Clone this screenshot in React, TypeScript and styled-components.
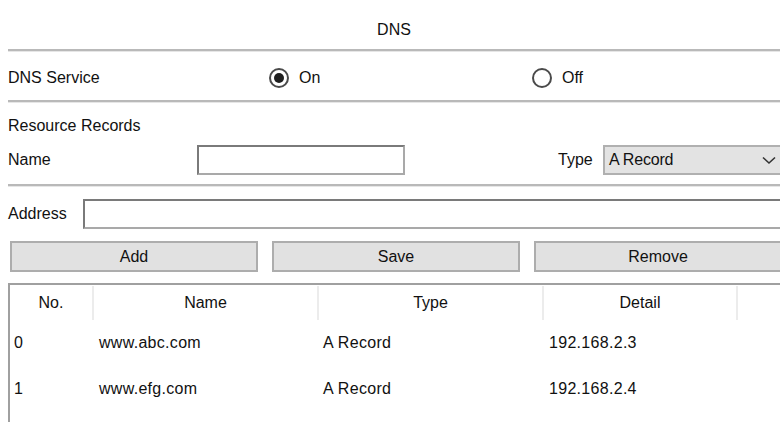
import React from "react";
import styled, { createGlobalStyle } from "styled-components";

const Global = createGlobalStyle`
  html, body { margin: 0; padding: 0; background: #fff; overflow: hidden; }
  body { font-family: "Liberation Sans", Arial, sans-serif; color: #111; }
  * { box-sizing: border-box; }
`;

const Page = styled.div`
  width: 780px;
  height: 422px;
  overflow: hidden;
  padding-left: 8px;
`;

const Panel = styled.div`
  width: 772px;
  display: flex;
  flex-direction: column;
  font-size: 16px;
  line-height: 18px;
`;

const Title = styled.div`
  height: 49px;
  display: flex;
  align-items: center;
  justify-content: center;
  padding-top: 10px;
`;

const Rule = styled.div`
  height: 3px;
  border-top: 2px solid #b9b9b9;
  border-bottom: 1px solid #e6e6e6;
`;

const ServiceRow = styled.div`
  display: grid;
  grid-template-columns: 261px 263px 1fr;
  align-items: center;
  height: 48px;
  padding-top: 3px;
`;

const RadioLabel = styled.label`
  display: flex;
  align-items: center;
  gap: 10px;
`;

const RadioCircle = styled.span<{ $checked?: boolean }>`
  width: 20px;
  height: 20px;
  border-radius: 50%;
  border: 2px solid #4a4a4a;
  display: flex;
  align-items: center;
  justify-content: center;
  &::after {
    content: "";
    width: 10px;
    height: 10px;
    border-radius: 50%;
    background: #1e1e1e;
    display: ${(p) => (p.$checked ? "block" : "none")};
  }
`;

const SectionLabel = styled.div`
  padding-top: 14px;
  height: 31px;
`;

const NameRow = styled.div`
  display: flex;
  align-items: center;
  height: 50px;
  padding: 11px 0 9px;
`;

const FieldLabel = styled.span<{ $w?: number }>`
  width: ${(p) => (p.$w ? `${p.$w}px` : "auto")};
  flex-shrink: 0;
`;

const TextBox = styled.div<{ $w?: string }>`
  width: ${(p) => p.$w || "auto"};
  height: 30px;
  border: 2px solid #7a7a7a;
  border-color: #7a7a7a #a9a9a9 #a9a9a9 #7a7a7a;
  background: #fff;
  flex-shrink: 0;
`;

const Select = styled.div`
  width: 180px;
  height: 30px;
  flex-shrink: 0;
  background: #e3e3e3;
  border: 2px solid #b0b0b0;
  display: flex;
  align-items: center;
  justify-content: space-between;
  padding: 0 5px 0 4px;
  letter-spacing: -0.2px;
`;

const AddressRow = styled.div`
  display: flex;
  align-items: center;
  padding-top: 12px;
`;

const ButtonRow = styled.div`
  display: grid;
  grid-template-columns: repeat(3, 248px);
  gap: 14px;
  margin-left: 2px;
  margin-top: 12px;
`;

const Button = styled.button`
  height: 31px;
  background: #e1e1e1;
  border: 2px solid #adadad;
  font-family: inherit;
  font-size: 16px;
  color: #111;
  padding: 0;
`;

const Table = styled.div`
  margin-top: 11px;
  width: 790px;
  height: 140px;
  border-top: 2px solid #a0a0a0;
  border-left: 2px solid #a0a0a0;
  padding-top: 1px;
  display: flex;
  flex-direction: column;
`;

const Cols = "84px 225px 225px 194px 1fr";

const HeadRow = styled.div`
  display: grid;
  grid-template-columns: ${Cols};
  height: 34px;
`;

const HeadCell = styled.div`
  display: flex;
  align-items: center;
  justify-content: center;
  border-right: 2px solid #ececec;
  &:last-child { border-right: none; }
`;

const BodyRow = styled.div`
  display: grid;
  grid-template-columns: ${Cols};
  height: 46px;
  align-items: center;
`;

const Cell = styled.div<{ $pad?: number }>`
  padding-left: ${(p) => p.$pad ?? 4}px;
  letter-spacing: 0.3px;
`;

const Chevron = () => (
  <svg width="14" height="9" viewBox="0 0 14 9">
    <path d="M1 1.5 L7 7 L13 1.5" stroke="#333" strokeWidth="1.6" fill="none" />
  </svg>
);

const records = [
  { no: 0, name: "www.abc.com", type: "A Record", detail: "192.168.2.3" },
  { no: 1, name: "www.efg.com", type: "A Record", detail: "192.168.2.4" },
];

export default function App() {
  return (
    <Page>
      <Global />
      <Panel>
        <Title>DNS</Title>
        <Rule />
        <ServiceRow>
          <span>DNS Service</span>
          <RadioLabel>
            <RadioCircle $checked />
            On
          </RadioLabel>
          <RadioLabel>
            <RadioCircle />
            Off
          </RadioLabel>
        </ServiceRow>
        <Rule />
        <SectionLabel>Resource Records</SectionLabel>
        <NameRow>
          <FieldLabel $w={189}>Name</FieldLabel>
          <TextBox $w="208px" />
          <FieldLabel $w={45} style={{ marginLeft: 153 }}>Type</FieldLabel>
          <Select>
            <span>A Record</span>
            <Chevron />
          </Select>
        </NameRow>
        <Rule />
        <AddressRow>
          <FieldLabel $w={75}>Address</FieldLabel>
          <TextBox $w="710px" />
        </AddressRow>
        <ButtonRow>
          <Button>Add</Button>
          <Button>Save</Button>
          <Button>Remove</Button>
        </ButtonRow>
        <Table>
          <HeadRow>
            <HeadCell>No.</HeadCell>
            <HeadCell>Name</HeadCell>
            <HeadCell>Type</HeadCell>
            <HeadCell>Detail</HeadCell>
            <HeadCell />
          </HeadRow>
          {records.map((r) => (
            <BodyRow key={r.no}>
              <Cell $pad={4}>{r.no}</Cell>
              <Cell $pad={5}>{r.name}</Cell>
              <Cell $pad={4}>{r.type}</Cell>
              <Cell $pad={5}>{r.detail}</Cell>
              <Cell />
            </BodyRow>
          ))}
        </Table>
      </Panel>
    </Page>
  );
}
